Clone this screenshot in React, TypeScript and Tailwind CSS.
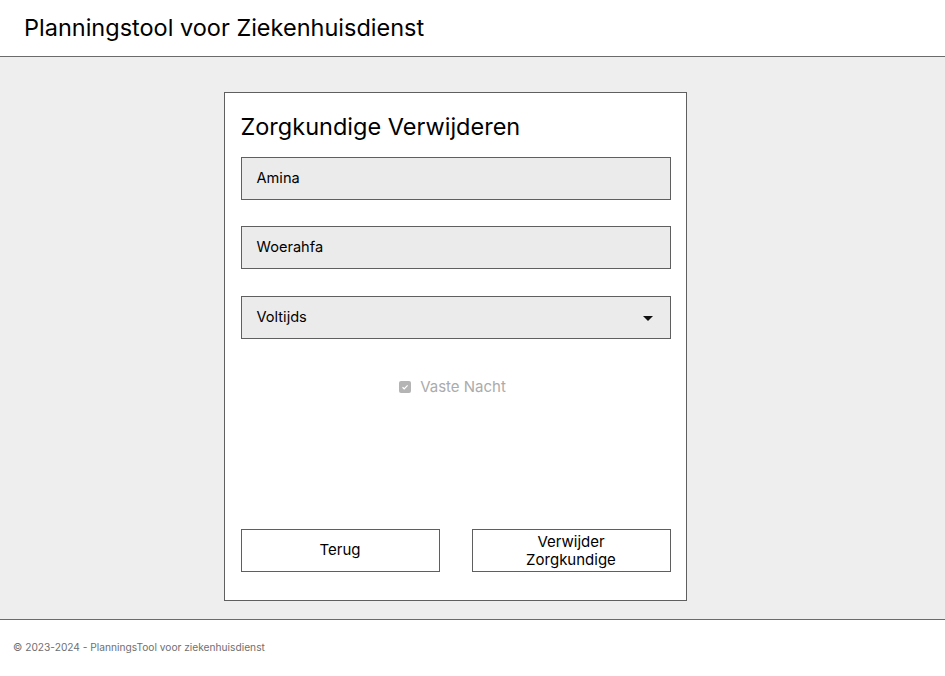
import React from "react"

export default function App() {
  return (
    <div className="min-h-[676px] flex flex-col bg-white text-black" style={{ fontFamily: "Inter, 'Noto Sans', sans-serif" }}>
      <header className="h-[57px] border-b border-[#6b6b6b] flex items-center pl-[24px]">
        <h1 className="text-[23.5px] leading-none -mt-[1px]">Planningstool voor Ziekenhuisdienst</h1>
      </header>

      <main className="h-[563px] bg-[#eeeeee] border-b border-[#6b6b6b] flex justify-center pt-[35px]">
        <div className="w-[463px] h-[509px] -ml-[35px] bg-white border border-[#5f5f5f] pl-[16px] pr-[15px] flex flex-col">
          <h2 className="text-[23.5px] leading-none mt-[22px] mb-[18px]">Zorgkundige Verwijderen</h2>

          <div className="h-[43px] bg-[#ebebeb] border border-[#5f5f5f] flex items-center px-[15px] pt-[2px] text-[14.6px]">Amina</div>
          <div className="h-[43px] mt-[26px] bg-[#ebebeb] border border-[#5f5f5f] flex items-center px-[15px] pt-[2px] text-[14.6px]">Woerahfa</div>
          <div className="h-[43px] mt-[27px] bg-[#ebebeb] border border-[#5f5f5f] flex items-center justify-between pl-[15px] pr-[17px] pt-[2px] text-[14.6px]">
            <span>Voltijds</span>
            <svg width="10" height="5" viewBox="0 0 10 5"><path d="M0 0h10L5 5z" fill="#111" /></svg>
          </div>

          <label className="mt-[37px] flex items-center justify-center gap-[9px] text-[15px] text-[#ababab] pr-[6px]">
            <span className="w-[12px] h-[12px] rounded-[2px] bg-[#b4b4b4] flex items-center justify-center">
              <svg width="8" height="8" viewBox="0 0 8 8"><path d="M1.5 4.2l1.7 1.6L6.6 2.3" stroke="#fff" strokeWidth="1.2" fill="none" /></svg>
            </span>
            Vaste Nacht
          </label>

          <div className="mt-auto mb-[28px] flex gap-[32px]">
            <button className="flex-1 h-[43px] border border-[#5f5f5f] bg-white text-[15px]">Terug</button>
            <button className="flex-1 h-[43px] border border-[#5f5f5f] bg-white text-[15px] leading-[18px]">
              Verwijder<br />Zorgkundige
            </button>
          </div>
        </div>
      </main>

      <footer className="h-[56px] flex items-center pl-[13px] text-[10.2px] text-[#6f6f6f]">
        © 2023-2024 - PlanningsTool voor ziekenhuisdienst
      </footer>
    </div>
  )
}
